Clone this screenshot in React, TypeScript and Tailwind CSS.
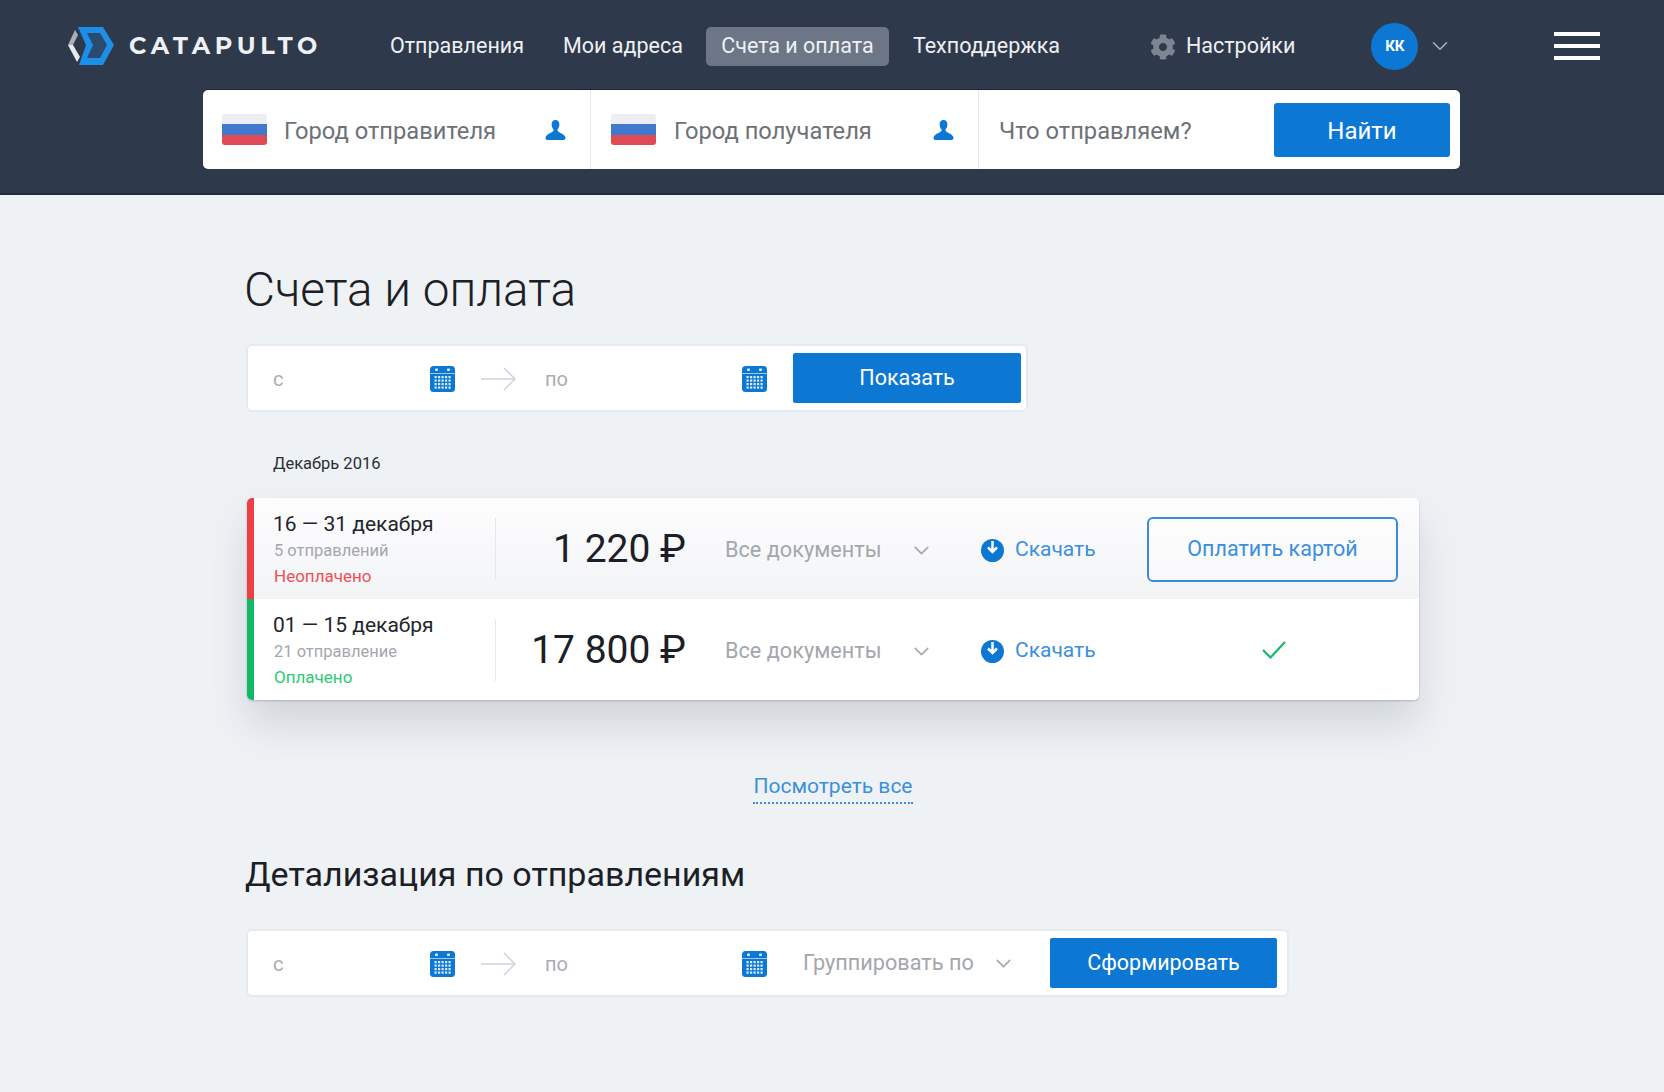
import { ChevronDown } from "lucide-react";
import { FaCog } from "react-icons/fa";

function Logo() {
  return (
    <svg width="46" height="40" viewBox="0 0 46 40">
      <polygon points="0,19 7,4 10,9 5,19" fill="#a9aeb7" />
      <polygon points="0,19 5,19 12,31 9,36" fill="#e8eaee" />
      <polygon points="10,1 35,1 46,19 35,39 11,39 18,19" fill="#1c8fe8" />
      <polygon points="19,7 32,7 39,19 32,32 19,32 25,19" fill="#2b4a6c" />
    </svg>
  );
}

function Flag() {
  return (
    <div className="flex h-[31px] w-[45px] shrink-0 flex-col overflow-hidden rounded-[3px]">
      <div className="h-[10px] bg-[#eceef1]" />
      <div className="h-[11px] bg-[#3f78cc]" />
      <div className="h-[10px] bg-[#e04a55]" />
    </div>
  );
}

function UserIcon() {
  return (
    <svg width="21" height="20" viewBox="0 0 21 20" className="shrink-0">
      <path
        d="M10.5 0C13 0 14.4 2 14.4 4.6c0 2.2-1 4-2 5.2 0 1.4 1 2.2 3.6 3.4 2.6 1.1 4 2.4 4.5 4.6.2 1.2-.5 2.2-2 2.2H2.5c-1.5 0-2.2-1-2-2.2.5-2.2 1.9-3.5 4.5-4.6 2.6-1.2 3.6-2 3.6-3.4-1-1.2-2-3-2-5.2C6.600 2 8 0 10.500 0z"
        fill="#0d78d3"
      />
    </svg>
  );
}

function CalendarIcon() {
  return (
    <svg width="25" height="26" viewBox="0 0 25 26" className="shrink-0">
      <rect x="0" y="0" width="25" height="26" rx="3.500" fill="#0d78d3" />
      <rect x="5" y="2.500" width="3" height="2.500" rx="1" fill="#e3effa" />
      <rect x="17" y="2.500" width="3" height="2.500" rx="1" fill="#e3effa" />
      <rect x="0" y="7" width="25" height="1" fill="#9cc8ee" />
      {[10, 13.500, 17, 20.500].map((y) =>
        [4.500, 8, 11.500, 15, 18.500].map((x) => (
          <rect key={`${x}-${y}`} x={x} y={y} width="2.200" height="2.200" fill="#dcebf9" />
        )),
      )}
    </svg>
  );
}

function ArrowIcon() {
  return (
    <svg width="35" height="26" viewBox="0 0 35 26" className="shrink-0">
      <path d="M0 13H33M23 2L34 13L23 24" fill="none" stroke="#ccd3dc" strokeWidth="1.500" />
    </svg>
  );
}

function DownloadIcon() {
  return (
    <svg width="23" height="23" viewBox="0 0 23 23" className="shrink-0">
      <circle cx="11.500" cy="11.500" r="11.500" fill="#0d78d3" />
      <path d="M11.500 2V12M7 8.500L11.500 13L16 8.500" fill="none" stroke="#fff" strokeWidth="2.500" />
    </svg>
  );
}

function DateRange() {
  return (
    <div className="flex items-center pt-[1px]">
      <span className="ml-[25px] w-[157px] text-[20px] text-[#a9adb3]">с</span>
      <CalendarIcon />
      <div className="ml-[26px]">
        <ArrowIcon />
      </div>
      <span className="ml-[29px] w-[197px] text-[20px] text-[#a9adb3]">по</span>
      <CalendarIcon />
    </div>
  );
}

function InvoiceRow(props: {
  period: string;
  count: string;
  status: string;
  statusClass: string;
  barClass: string;
  amount: string;
  rowClass: string;
  action: React.ReactNode;
}) {
  return (
    <div className={`flex h-[101px] items-center ${props.rowClass}`}>
      <div className={`h-full w-[7px] shrink-0 ${props.barClass}`} />
      <div className="w-[241px] shrink-0 pl-[19px]">
        <div className="pt-[1px] text-[21px] leading-[28px] text-[#22262c]">{props.period}</div>
        <div className="ml-px pt-[1px] text-[16.500px] leading-[24px] text-[#a3a7ad]">{props.count}</div>
        <div className={`ml-px pt-[1px] text-[17px] leading-[25px] ${props.statusClass}`}>{props.status}</div>
      </div>
      <div className="h-[62px] w-px shrink-0 bg-[#e4e7eb]" />
      <div className="w-[190px] shrink-0 pt-[2px] text-right text-[39px] leading-none text-[#1c2026]">
        {props.amount}
      </div>
      <div className="ml-[39px] w-[184px] shrink-0 pt-[3px] text-[21.700px] text-[#a3a7ad]">Все документы</div>
      <ChevronDown size={25} strokeWidth={1.5} className="mt-[3px] shrink-0 text-[#a3a7ad]" />
      <div className="ml-[47px] flex w-[130px] shrink-0 items-center gap-[11px] pt-[3px]">
        <DownloadIcon />
        <span className="text-[21px] text-[#3b8fdc]">Скачать</span>
      </div>
      <div className="ml-[36px] flex w-[251px] shrink-0 justify-center pt-[1px]">{props.action}</div>
    </div>
  );
}

export default function App() {
  return (
    <div className="min-h-[1092px] bg-[#eff2f5] font-['Roboto',sans-serif]">
      <header className="h-[195px] border-b-2 border-[#232c3b] bg-[#2e394b]">
        <div className="flex h-[90px] items-center pl-[68px] pt-[2px]">
          <Logo />
          <span className="ml-[15px] font-['Montserrat','Liberation_Sans',sans-serif] text-[24px] font-bold tracking-[4.700px] text-[#eef0f3]">
            CATAPULTO
          </span>
          <nav className="ml-[68px] flex items-center pt-[1px] text-[21.500px] text-[#eef0f3]">
            <a>Отправления</a>
            <a className="ml-[39px]">Мои адреса</a>
            <a className="ml-[23px] flex h-[39px] w-[183px] items-center justify-center rounded-[5px] bg-[#6c7686]">
              Счета и оплата
            </a>
            <a className="ml-[24px]">Техподдержка</a>
            <FaCog size={26} className="ml-[90px] text-[#7d8593]" />
            <a className="ml-[10px]">Настройки</a>
          </nav>
          <div className="ml-[76px] flex h-[47px] w-[47px] items-center justify-center rounded-full bg-[#0d78d3] text-[15px] font-bold text-white">
            КК
          </div>
          <ChevronDown size={26} strokeWidth={1.5} className="ml-[9px] text-[#a6adb8]" />
          <div className="ml-[101px] flex w-[46px] flex-col gap-[8px]">
            <div className="h-[4px] bg-white" />
            <div className="h-[4px] bg-white" />
            <div className="h-[4px] bg-white" />
          </div>
        </div>
        <div className="ml-[203px] flex h-[79px] w-[1257px] items-center rounded-[5px] bg-white text-[23.700px] text-[#6d7177] shadow-[0_-1px_0_#1d2533]">
          <div className="flex h-full w-[388px] items-center border-r border-[#e4e7eb] pl-[19px]">
            <Flag />
            <span className="ml-[17px] w-[261px] pt-[5px]">Город отправителя</span>
            <UserIcon />
          </div>
          <div className="flex h-full w-[388px] items-center border-r border-[#e4e7eb] pl-[20px]">
            <Flag />
            <span className="ml-[18px] w-[259px] pt-[5px]">Город получателя</span>
            <UserIcon />
          </div>
          <span className="ml-[20px] w-[275px] pt-[5px]">Что отправляем?</span>
          <button className="h-[54px] w-[176px] rounded-[3px] bg-[#0d78d3] pt-[2px] text-[24px] text-white">
            Найти
          </button>
        </div>
      </header>

      <main className="pl-[245px]">
        <h1 className="-ml-px mt-[65px] text-[47.700px] font-light leading-[60px] text-[#1c2026]">Счета и оплата</h1>

        <div className="ml-px mt-[24px] flex h-[68px] w-[782px] items-center rounded-[6px] border-2 border-[#e6eaef] bg-white">
          <DateRange />
          <button className="ml-[26px] h-[50px] w-[228px] rounded-[2px] bg-[#0d78d3] text-[21.500px] text-white">
            Показать
          </button>
        </div>

        <div className="ml-[28px] mt-[41px] text-[16.500px] leading-[22px] text-[#2a2e34]">Декабрь 2016</div>

        <div className="ml-[2px] mt-[23px] w-[1172px] overflow-hidden rounded-[5px] shadow-[0_24px_40px_rgba(50,60,80,0.16),0_1px_2px_rgba(50,60,80,0.25)]">
          <InvoiceRow
            period="16 — 31 декабря"
            count="5 отправлений"
            status="Неоплачено"
            statusClass="text-[#ee5058]"
            barClass="bg-[#ee3f45]"
            amount="1 220 ₽"
            rowClass="bg-gradient-to-b from-[#fdfdfe] to-[#f3f4f6]"
            action={
              <button className="h-[65px] w-[251px] rounded-[6px] border-2 border-[#3b8bd6] bg-white/40 text-[21.500px] text-[#3b8fdc]">
                Оплатить картой
              </button>
            }
          />
          <InvoiceRow
            period="01 — 15 декабря"
            count="21 отправление"
            status="Оплачено"
            statusClass="text-[#2fc877]"
            barClass="bg-[#12b866]"
            amount="17 800 ₽"
            rowClass="bg-white"
            action={
              <svg width="24" height="20" viewBox="0 0 24 20" className="ml-[3px]">
                <path d="M1 10L8.500 17.500L23 2" fill="none" stroke="#12b866" strokeWidth="2.200" />
              </svg>
            }
          />
        </div>

        <div className="mt-[71px] flex justify-center pr-[245px]">
          <a className="ml-[2px] border-b-2 border-dotted border-[#3b8fdc] text-[21px] leading-[31px] text-[#3b8fdc]">
            Посмотреть все
          </a>
        </div>

        <h2 className="mt-[45px] text-[34px] font-normal leading-[50px] text-[#1c2026]">
          Детализация по отправлениям
        </h2>

        <div className="ml-px mt-[30px] flex h-[68px] w-[1043px] items-center rounded-[6px] border-2 border-[#e6eaef] bg-white">
          <DateRange />
          <span className="ml-[36px] w-[188px] text-[21.700px] text-[#a3a7ad]">Группировать по</span>
          <ChevronDown size={25} strokeWidth={1.5} className="text-[#a3a7ad]" />
          <button className="ml-[34px] h-[50px] w-[227px] rounded-[2px] bg-[#0d78d3] text-[21.500px] text-white">
            Сформировать
          </button>
        </div>
      </main>
    </div>
  );
}
